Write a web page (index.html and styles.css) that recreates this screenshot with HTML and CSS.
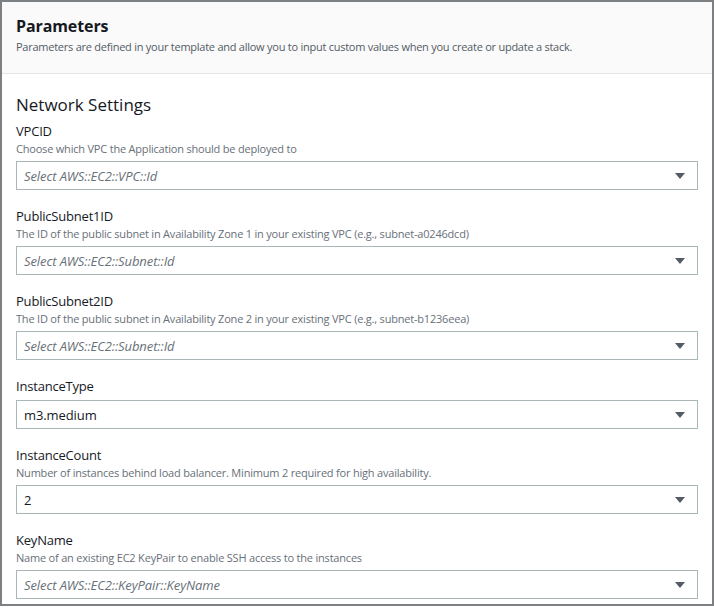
FILE: index.html
```html
<!DOCTYPE html>
<html>
<head>
<meta charset="utf-8">
<link rel="stylesheet" href="styles.css">
</head>
<body>
<div class="panel">
  <div class="panel-header">
    <h2 class="title">Parameters</h2>
    <p class="subtitle">Parameters are defined in your template and allow you to input custom values when you create or update a stack.</p>
  </div>
  <div class="panel-body">
    <h3 class="section">Network Settings</h3>

    <div class="field">
      <div class="label">VPCID</div>
      <div class="desc">Choose which VPC the Application should be deployed to</div>
      <div class="select placeholder"><span>Select AWS::EC2::VPC::Id</span><svg class="caret" width="12" height="8" viewBox="0 0 12 8"><path d="M1 1h10L6 7z" fill="#545b64"/></svg></div>
    </div>

    <div class="field">
      <div class="label">PublicSubnet1ID</div>
      <div class="desc">The ID of the public subnet in Availability Zone 1 in your existing VPC (e.g., subnet-a0246dcd)</div>
      <div class="select placeholder"><span>Select AWS::EC2::Subnet::Id</span><svg class="caret" width="12" height="8" viewBox="0 0 12 8"><path d="M1 1h10L6 7z" fill="#545b64"/></svg></div>
    </div>

    <div class="field">
      <div class="label">PublicSubnet2ID</div>
      <div class="desc">The ID of the public subnet in Availability Zone 2 in your existing VPC (e.g., subnet-b1236eea)</div>
      <div class="select placeholder"><span>Select AWS::EC2::Subnet::Id</span><svg class="caret" width="12" height="8" viewBox="0 0 12 8"><path d="M1 1h10L6 7z" fill="#545b64"/></svg></div>
    </div>

    <div class="field">
      <div class="label">InstanceType</div>
      <div class="select"><span>m3.medium</span><svg class="caret" width="12" height="8" viewBox="0 0 12 8"><path d="M1 1h10L6 7z" fill="#545b64"/></svg></div>
    </div>

    <div class="field">
      <div class="label">InstanceCount</div>
      <div class="desc">Number of instances behind load balancer. Minimum 2 required for high availability.</div>
      <div class="select"><span>2</span><svg class="caret" width="12" height="8" viewBox="0 0 12 8"><path d="M1 1h10L6 7z" fill="#545b64"/></svg></div>
    </div>

    <div class="field">
      <div class="label">KeyName</div>
      <div class="desc">Name of an existing EC2 KeyPair to enable SSH access to the instances</div>
      <div class="select placeholder"><span>Select AWS::EC2::KeyPair::KeyName</span><svg class="caret" width="12" height="8" viewBox="0 0 12 8"><path d="M1 1h10L6 7z" fill="#545b64"/></svg></div>
    </div>
  </div>
</div>
</body>
</html>
```

FILE: styles.css
```css
* { box-sizing: border-box; }
html, body { margin: 0; padding: 0; background: #fff; }
body {
  font-family: "Open Sans", "Liberation Sans", sans-serif;
  color: #16191f;
}
.panel {
  width: 714px;
  height: 606px;
  border: 2px solid #7d8083;
  overflow: hidden;
  background: #fff;
}
.panel-header {
  background: #fafafa;
  border-bottom: 1px solid #e4e6e6;
  padding: 15px 14px 18px;
}
.title {
  margin: 0;
  font-size: 16px;
  line-height: 18px;
  font-weight: 700;
  letter-spacing: -0.1px;
  color: #16191f;
}
.subtitle {
  margin: 4px 0 0;
  font-size: 11px;
  line-height: 16px;
  letter-spacing: -0.25px;
  color: #545b64;
}
.panel-body {
  padding: 20px 14px 0;
}
.section {
  margin: 0 0 5px;
  font-size: 17px;
  line-height: 22px;
  font-weight: 400;
  color: #16191f;
}
.field {
  display: flex;
  flex-direction: column;
  margin-bottom: 16px;
}
.label {
  font-size: 13px;
  line-height: 20px;
  letter-spacing: -0.2px;
  color: #16191f;
}
.desc {
  font-size: 11px;
  line-height: 16px;
  letter-spacing: -0.2px;
  color: #687078;
}
.select {
  margin-top: 4px;
  height: 29px;
  border: 1px solid #aab7b8;
  display: flex;
  align-items: center;
  justify-content: space-between;
  padding: 0 11px 0 7px;
  font-size: 13px;
  letter-spacing: -0.1px;
  color: #16191f;
}
.select.placeholder span {
  font-style: italic;
  color: #687078;
}
.caret { display: block; }
```
